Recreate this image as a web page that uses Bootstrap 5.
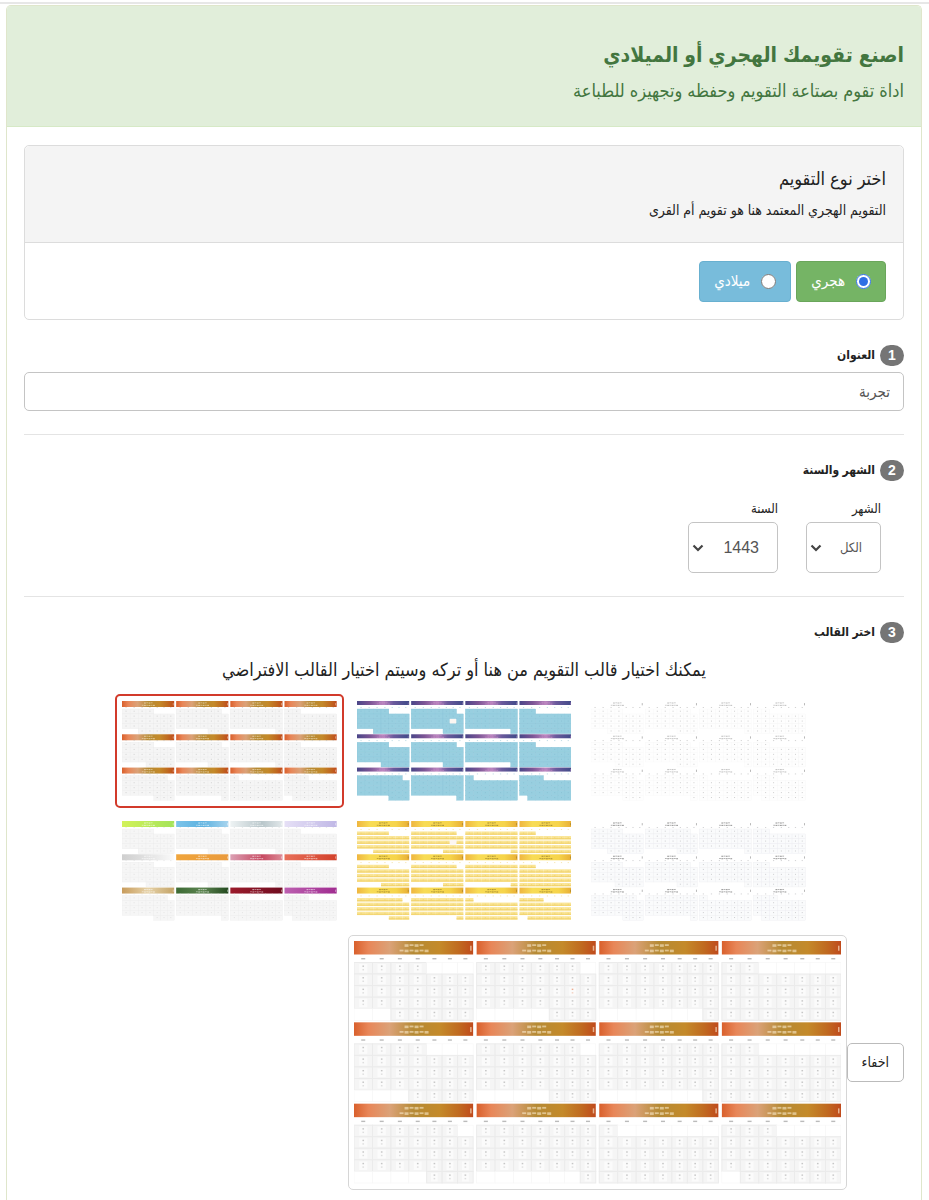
<!DOCTYPE html>
<html lang="ar" dir="rtl">
<head>
<meta charset="utf-8">
<meta name="viewport" content="width=device-width, initial-scale=1">
<title>اصنع تقويمك الهجري أو الميلادي</title>
<link rel="stylesheet" href="https://cdn.jsdelivr.net/npm/bootstrap@5.3.0/dist/css/bootstrap.min.css">
<style>
  body, button, input, select { font-family: "Liberation Sans", "DejaVu Sans Condensed", sans-serif; }
  body { font-size: 14px; line-height: 20px; color: #222; background: #fff; padding-top: 2px; }
  .top-rule { height: 2px; background: #e7e7e7; }
  .tool-panel { margin: 1px 7px 0 6px; border: 1px solid #dfe6cb; border-bottom: 0; border-radius: 5px 5px 0 0; }
  .tool-head { background: #e1eeda; border-bottom: 1px solid #d6e9c6; color: #43763f; padding: 32px 17px 22px; border-radius: 4px 4px 0 0; }
  .tool-head h1 { font-size: 21px; line-height: 34px; font-weight: 700; margin: 0 0 6px; }
  .tool-head p { font-size: 18px; line-height: 26px; margin: 0; }
  .tool-body { padding: 18px 17px 10px; }
  .kind-card { border-color: #dcdcdc; border-radius: 5px; margin-bottom: 25px; }
  .kind-card .card-header { background: #f4f4f4; border-color: #dcdcdc; padding: 20px 17px 22px; }
  .kind-card h2 { font-size: 18px; line-height: 26px; font-weight: 400; margin: 0 0 8px; }
  .kind-card p { margin: 0; }
  .kind-card .card-body { padding: 18px 17px 17px; gap: 5px; }
  .kind-btn { display: inline-flex; align-items: center; gap: 11px; height: 41px; padding: 0 14px; border-radius: 4px; font-size: 15px; color: #fff !important; }
  .kind-btn input { width: 15px; height: 15px; margin: 0; accent-color: #2f6fe4; }
  .kind-hijri { background: #75b465 !important; border-color: #6aa65b !important; }
  .kind-greg { background: #78bcdb !important; border-color: #68b0d0 !important; }
  .step-title { font-weight: 700; font-size: 12px; line-height: 20px; display: flex; gap: 5px; margin: 0; }
  .step-no { background: #757575; color: #fff; width: 24px; height: 21px; border-radius: 11px; text-align: center; font-size: 14px; line-height: 21px; }
  .field-box { border: 1px solid #c4c4c4; border-radius: 5px; color: #555; font-size: 15px; height: 39px; padding: 0 13px; margin-top: 6px; }
  .step-rule { border: 0; border-top: 1px solid #e4e4e4; opacity: 1; margin: 23px 0 25px; }
  .picks { gap: 28px; padding: 18px 23px 0; }
  .picks label { font-size: 13px; line-height: 20px; margin-bottom: 3px; }
  .pick { display: block; appearance: none; height: 51px; border: 1px solid #c4c4c4; border-radius: 5px; color: #555; padding: 0 18px 0 0; background: #fff url("data:image/svg+xml,%3Csvg xmlns='http://www.w3.org/2000/svg' viewBox='0 0 12 8'%3E%3Cpath d='M1.5 1.5 6 6l4.500-4.500' fill='none' stroke='%23444' stroke-width='2.200'/%3E%3C/svg%3E") no-repeat 3px center / 12px 8px; }
  .pick-month { width: 75px; font-size: 13px; }
  .pick-year { width: 90px; font-size: 16px; }
  .template-note { font-size: 18px; line-height: 28px; font-weight: 400; text-align: center; margin: 13px 0 10px; }
  .template-grid { display: grid; grid-template-columns: repeat(3, 1fr); gap: 6px; max-width: 698px; }
  .template-btn { background: none; border: 2px solid transparent; border-radius: 5px; padding: 5px; }
  .template-btn.chosen { border-color: #d23a2b; }
  .template-btn svg, .preview-frame svg { display: block; width: 100%; height: auto; }
  .preview-row { margin-top: 7px; }
  .preview-frame { flex: 0 1 499px; border: 1px solid #d6d6d6; border-radius: 5px; padding: 5px; }
  .hide-btn { height: 39px; padding: 0 14px; border: 1px solid #bbb; border-radius: 5px; font-size: 14px; color: #222; background: #fff; }
</style>
</head>
<body>
<div class="top-rule"></div>
<main class="tool-panel">
  <header class="tool-head">
    <h1>اصنع تقويمك الهجري أو الميلادي</h1>
    <p>اداة تقوم بصتاعة التقويم وحفظه وتجهيزه للطباعة</p>
  </header>
  <form class="tool-body">
    <section class="card kind-card">
      <div class="card-header">
        <h2>اختر نوع التقويم</h2>
        <p>التقويم الهجري المعتمد هنا هو تقويم أم القرى</p>
      </div>
      <div class="card-body d-flex">
        <label class="btn kind-btn kind-hijri"><input type="radio" name="kind" checked>هجري</label>
        <label class="btn kind-btn kind-greg"><input type="radio" name="kind">ميلادي</label>
      </div>
    </section>

    <label class="step-title" for="title"><span class="step-no">1</span>العنوان</label>
    <input class="field-box w-100" id="title" type="text" value="تجربة">
    <hr class="step-rule">

    <h3 class="step-title"><span class="step-no">2</span>الشهر والسنة</h3>
    <div class="d-flex picks">
      <div><label class="d-block" for="month">الشهر</label><select class="pick pick-month" id="month"><option>الكل</option></select></div>
      <div><label class="d-block" for="year">السنة</label><select class="pick pick-year" id="year"><option>1443</option></select></div>
    </div>
    <hr class="step-rule">

    <h3 class="step-title"><span class="step-no">3</span>اختر القالب</h3>
    <h4 class="template-note">يمكنك اختيار قالب التقويم من هنا أو تركه وسيتم اختيار القالب الافتراضي</h4>
    <div class="template-grid mx-auto">
      <button type="button" class="template-btn"><svg viewBox="0 0 215 100" data-theme="plain"></svg></button>
      <button type="button" class="template-btn"><svg viewBox="0 0 215 100" data-theme="blue"></svg></button>
      <button type="button" class="template-btn chosen"><svg viewBox="0 0 215 100" data-theme="orange"></svg></button>
      <button type="button" class="template-btn"><svg viewBox="0 0 215 100" data-theme="lined"></svg></button>
      <button type="button" class="template-btn"><svg viewBox="0 0 215 100" data-theme="yellow"></svg></button>
      <button type="button" class="template-btn"><svg viewBox="0 0 215 100" data-theme="mixed"></svg></button>
    </div>
    <div class="preview-row d-flex align-items-center">
      <button type="button" class="hide-btn">اخفاء</button>
      <div class="preview-frame"><svg viewBox="0 0 487 243" data-theme="orange" data-large></svg></div>
    </div>
  </form>
</main>
<svg width="0" height="0" class="position-absolute">
  <defs>
    <linearGradient id="g-orange"><stop offset="0" stop-color="#d9602c"/><stop offset=".12" stop-color="#e88658"/><stop offset=".3" stop-color="#dba278"/><stop offset=".5" stop-color="#b58a34"/><stop offset=".72" stop-color="#c48a2a"/><stop offset=".88" stop-color="#c06a20"/><stop offset="1" stop-color="#c04a1c"/></linearGradient>
    <linearGradient id="g-blue"><stop offset="0" stop-color="#4a4688"/><stop offset=".25" stop-color="#7c5595"/><stop offset=".5" stop-color="#b883bd"/><stop offset=".7" stop-color="#6b5a9c"/><stop offset="1" stop-color="#3f4a88"/></linearGradient>
    <linearGradient id="g-yellow"><stop offset="0" stop-color="#efb640"/><stop offset=".25" stop-color="#f8dc55"/><stop offset=".75" stop-color="#f6d44a"/><stop offset="1" stop-color="#e8ae35"/></linearGradient>
    <linearGradient id="g0"><stop offset="0" stop-color="#d2f25a"/><stop offset="1" stop-color="#a4e35a"/></linearGradient>
    <linearGradient id="g1"><stop offset="0" stop-color="#7cc4ea"/><stop offset=".5" stop-color="#5db2e0"/><stop offset="1" stop-color="#a8d4ee"/></linearGradient>
    <linearGradient id="g2"><stop offset="0" stop-color="#eef3f4"/><stop offset=".6" stop-color="#b8c6ca"/><stop offset="1" stop-color="#e2e8ea"/></linearGradient>
    <linearGradient id="g3"><stop offset="0" stop-color="#e6e0f6"/><stop offset="1" stop-color="#c0b8e6"/></linearGradient>
    <linearGradient id="g4"><stop offset="0" stop-color="#cfcfcf"/><stop offset=".5" stop-color="#e2e2e2"/><stop offset="1" stop-color="#fafafa"/></linearGradient>
    <linearGradient id="g5"><stop offset="0" stop-color="#f0a53c"/><stop offset="1" stop-color="#e99a3c"/></linearGradient>
    <linearGradient id="g6"><stop offset="0" stop-color="#dba0b4"/><stop offset=".6" stop-color="#c64860"/><stop offset="1" stop-color="#dc8a96"/></linearGradient>
    <linearGradient id="g7"><stop offset="0" stop-color="#e8705a"/><stop offset="1" stop-color="#d2402a"/></linearGradient>
    <linearGradient id="g8"><stop offset="0" stop-color="#c89c5c"/><stop offset=".5" stop-color="#e6d2a8"/><stop offset="1" stop-color="#c4a468"/></linearGradient>
    <linearGradient id="g9"><stop offset="0" stop-color="#3c6a34"/><stop offset=".5" stop-color="#5c8450"/><stop offset="1" stop-color="#244a20"/></linearGradient>
    <linearGradient id="g10"><stop offset="0" stop-color="#9c1c2c"/><stop offset="1" stop-color="#700c20"/></linearGradient>
    <linearGradient id="g11"><stop offset="0" stop-color="#bc60b0"/><stop offset="1" stop-color="#a02c90"/></linearGradient>
  </defs>
</svg>
<script>
  // For each month, in drawing order: days filled in its first week and in its last week.
  const months = [[4,5],[6,3],[7,1],[2,7],[4,4],[6,3],[7,1],[2,7],[6,3],[7,1],[1,7],[3,6]];
  // Week-day column edges as shares of the month's width.
  const edges = [0, .155, .31, .46, .61, .74, .87, 1];
  const themes = {
    orange: { head: () => 'url(#g-orange)', cell: '#f5f5f5', line: '#ebebeb', dot: '#b4b4b4', title: '#fff3d8' },
    mixed:  { head: i => `url(#g${i})`, cell: '#f6f6f6', line: '#ececec', dot: '#d4d4d4', title: '#ffffff' },
    blue:   { head: () => 'url(#g-blue)', cell: '#98cfe0', line: '#8ac4d8', dot: '#7fb8cc', title: '#c890c8' },
    yellow: { head: () => 'url(#g-yellow)', cell: '#fae596', line: '#f2d470', dot: '#eccb60', title: '#7a6320' },
    plain:  { head: () => 'none', cell: '#fefefe', line: '#f6f6f6', dot: '#a4a4a4', title: '#999' },
    lined:  { head: () => 'none', cell: '#fafbfc', line: '#ececef', dot: '#a4a4a8', title: '#555' }
  };
  document.querySelectorAll('svg[data-theme]').forEach(svg => {
    const name = svg.dataset.theme, t = themes[name], large = 'large' in svg.dataset;
    const { width: W, height: H } = svg.viewBox.baseVal;
    const gap = large ? 3.5 : 2, mw = (W - gap * 3) / 4, pitch = (H + (large ? 1 : 0)) / 3;
    const headH = name === 'blue' ? 4 : large ? 13.5 : 6;
    const top = large ? 21.5 : name === 'yellow' ? 10 : 8, rowH = (pitch - top - (large ? 2 : .6)) / 5;
    const rect = (x, y, w, h, fill, extra = '') => `<rect x="${x.toFixed(2)}" y="${y.toFixed(2)}" width="${w.toFixed(2)}" height="${h.toFixed(2)}" fill="${fill}" ${extra}/>`;
    let out = '';
    months.forEach(([first, last], i) => {
      const x = (i % 4) * (mw + gap), y = Math.floor(i / 4) * pitch;
      out += rect(x, y, mw, headH, t.head(i));
      const s = large ? 1 : .45;
      const dash = `opacity=".55" stroke="none"`;
      // Two broken lines stand for the month's two names.
      [[9, .24], [14, .64]].forEach(([half, at]) => {
        for (let k = -half; k < half; k += 5) out += rect(x + mw / 2 + k * s, y + headH * at, 4 * s, (k % 2 ? 2.6 : 1.8) * s, t.title, dash);
      });
      out += rect(x + mw - 3 * s, y + headH * .35, 1.5 * s, 5 * s, name === 'plain' || name === 'lined' ? '#555' : t.title, 'opacity=".6"');
      for (let c = 0; c < 7; c++) {
        const cx = x + edges[c] * mw, cw = (edges[c + 1] - edges[c]) * mw, mid = cx + cw / 2;
        out += large ? rect(mid - 2, y + 17, 4, 1.4, '#aaa', 'opacity=".8"') : rect(mid - .6, y + top - 2, 1.2, .8, t.dot, 'opacity=".6"');
        for (let r = 0; r < 5; r++) {
          const ry = y + top + r * rowH;
          const filled = !(r === 0 && c >= first) && !(r === 4 && c < 7 - last);
          const special = i === 1 && r === 2 && c === 5;
          if (!filled) { if (large) out += rect(cx, ry, cw, rowH, '#fff', 'stroke="#f6f6f6" stroke-width=".6"'); continue; }
          if (special && (name === 'blue' || name === 'yellow')) { out += rect(cx, ry, cw, rowH, '#fcf6f2'); continue; }
          if (name === 'yellow') {
            out += rect(cx, ry + .5, cw, rowH - 1.1, t.cell) + rect(cx, ry + rowH - 2, cw, 1.2, t.line);
          } else {
            out += rect(cx, ry, cw, rowH, t.cell, `stroke="${t.line}" stroke-width="${large ? 1 : .35}"`);
          }
          if (large) {
            out += rect(cx + cw * .28, ry + 1.5, cw * .44, rowH - 3, '#fbfbfb');
            out += rect(mid - .8, ry + 3, 1.6, 1.4, special ? '#e8906a' : t.dot, 'opacity=".75"') + rect(mid - .8, ry + 6.5, 1.6, 1.4, special ? '#e8906a' : t.dot, 'opacity=".4"');
          } else {
            out += rect(mid - .5, ry + rowH * .35, 1, 1, t.dot, 'opacity=".5"');
          }
        }
      }
    });
    svg.innerHTML = out;
  });
</script>
<script src="https://cdn.jsdelivr.net/npm/bootstrap@5.3.0/dist/js/bootstrap.bundle.min.js"></script>
</body>
</html>
